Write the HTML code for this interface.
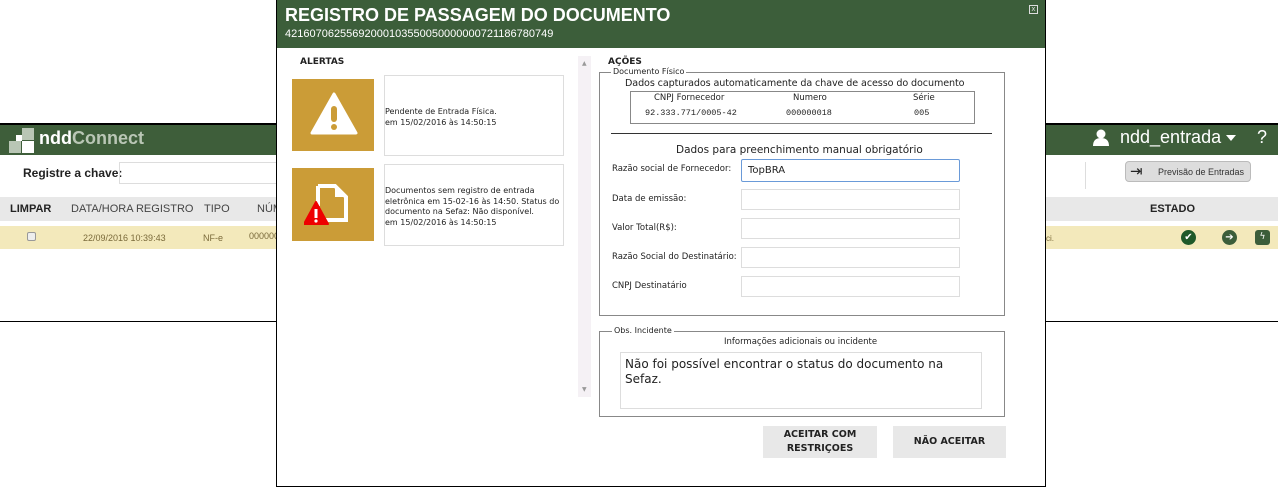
<!DOCTYPE html><html><head><meta charset="utf-8"><style>
*{box-sizing:border-box;margin:0;padding:0}
body{width:1278px;height:490px;background:#fff;position:relative;overflow:hidden;font-family:"DejaVu Sans","Liberation Sans",sans-serif;color:#222}
.a{position:absolute}
.f{font-family:"Liberation Sans",sans-serif}
</style></head><body>
<div class="a" style="left:0;top:123px;width:1278px;height:199px;border-top:2px solid #000;border-bottom:1px solid #000"></div>
<div class="a" style="left:0;top:125px;width:1278px;height:30px;background:#3e5e3a"></div>
<div class="a" style="left:9px;top:128px;width:26px;height:26px">
<div class="a" style="left:13px;top:0;width:12px;height:12px;background:#b9c6b5"></div>
<div class="a" style="left:0;top:13px;width:12px;height:12px;background:#b9c6b5"></div>
<div class="a" style="left:13px;top:13px;width:12px;height:12px;background:#fff"></div>
<div class="a" style="left:7px;top:7px;width:6px;height:6px;background:#fff"></div></div>
<div class="a f" style="left:39px;top:128px;font-size:18px;font-weight:bold;color:#fff">ndd<span style="color:#b9c6b5">Connect</span></div>
<div class="a f" style="left:23px;top:166px;font-size:12px;font-weight:bold">Registre a chave:</div>
<div class="a" style="left:119px;top:162px;width:160px;height:22px;border:1px solid #ddd"></div>
<div class="a" style="left:0;top:197px;width:1278px;height:24px;background:#e8e8e8"></div>
<div class="a f" style="left:10px;top:203px;font-size:11px;font-weight:bold">LIMPAR</div>
<div class="a f" style="left:71px;top:203px;font-size:11px;color:#444">DATA/HORA REGISTRO</div>
<div class="a f" style="left:204px;top:203px;font-size:11px;color:#444">TIPO</div>
<div class="a f" style="left:257px;top:203px;font-size:11px;color:#444">NÚM</div>
<div class="a f" style="left:1150px;top:203px;font-size:11px;font-weight:bold">ESTADO</div>
<div class="a" style="left:0;top:226px;width:1278px;height:23px;background:#f3e9bb"></div>
<div class="a" style="left:27px;top:232px;width:9px;height:9px;border:1px solid #999;border-radius:2px;background:#eee"></div>
<div class="a f" style="left:83px;top:233px;font-size:9px;color:#7a6a3a">22/09/2016 10:39:43</div>
<div class="a f" style="left:203px;top:233px;font-size:9px;color:#7a6a3a">NF-e</div>
<div class="a f" style="left:249px;top:231px;font-size:9px;color:#7a6a3a">000000</div>
<div class="a f" style="left:1046px;top:234px;font-size:8px;color:#7a6a3a">ci.</div>
<div class="a" style="left:1181px;top:230px;width:15px;height:15px;border-radius:50%;background:#1f5a2a;color:#fff;font-size:10px;text-align:center;line-height:15px">✔</div>
<div class="a" style="left:1222px;top:230px;width:15px;height:15px;border-radius:50%;background:#3c5e3a;color:#fff;font-size:10px;text-align:center;line-height:15px">➔</div>
<div class="a" style="left:1255px;top:230px;width:15px;height:15px;border-radius:3px;background:#3c5e3a;color:#fff;font-size:9px;text-align:center;line-height:15px">ϟ</div>
<svg class="a" style="left:1093px;top:129px" width="16" height="18"><circle cx="8" cy="5" r="4.5" fill="#fff"/><path d="M0 17 Q0 9 8 9 Q16 9 16 17 Z" fill="#fff"/></svg>
<div class="a f" style="left:1120px;top:127px;font-size:18px;color:#fff">ndd_entrada</div>
<div class="a" style="left:1226px;top:135px;width:0;height:0;border-left:5px solid transparent;border-right:5px solid transparent;border-top:6px solid #fff"></div>
<div class="a f" style="left:1257px;top:127px;font-size:18px;color:#fff">?</div>
<div class="a" style="left:1085px;top:162px;width:1px;height:27px;background:#ddd"></div>
<div class="a" style="left:1125px;top:161px;width:126px;height:21px;background:#ddd;border:1px solid #bbb;border-radius:4px"></div>
<div class="a" style="left:1130px;top:162px;font-size:15px">⇥</div>
<div class="a f" style="left:1158px;top:167px;font-size:9px;color:#333">Previsão de Entradas</div>
<!-- modal -->
<div class="a" style="left:276px;top:0;width:770px;height:487px;background:#fff;border:1px solid #000;border-top:none"></div>
<div class="a" style="left:277px;top:0;width:768px;height:48px;background:#3c5e3a"></div>
<div class="a f" style="left:285px;top:5px;font-size:18px;font-weight:bold;color:#fff">REGISTRO DE PASSAGEM DO DOCUMENTO</div>
<div class="a f" style="left:285px;top:28px;font-size:11px;color:#fff">42160706255692000103550050000000721186780749</div>
<div class="a" style="left:1029px;top:5px;width:9px;height:9px;border:1px solid #ddd;color:#ddd;font-size:7px;line-height:7px;text-align:center">x</div>
<div class="a" style="left:300px;top:57px;font-size:9px;font-weight:bold">ALERTAS</div>
<div class="a" style="left:292px;top:79px;width:82px;height:72px;background:#cb9c37"></div>
<svg class="a" style="left:309px;top:91px" width="50" height="45"><path d="M25 3 L47 42 L3 42 Z" fill="#fff" stroke="#fff" stroke-width="3" stroke-linejoin="round"/><rect x="22" y="15" width="6" height="16" rx="3" fill="#cb9c37"/><circle cx="25" cy="36" r="3" fill="#cb9c37"/></svg>
<div class="a" style="left:384px;top:75px;width:180px;height:81px;border:1px solid #ddd"></div>
<div class="a" style="left:385px;top:106px;font-size:8px;line-height:11px">Pendente de Entrada Física.<br>em 15/02/2016 às 14:50:15</div>
<div class="a" style="left:292px;top:168px;width:82px;height:73px;background:#cb9c37"></div>
<svg class="a" style="left:304px;top:180px" width="60" height="50"><path d="M14 6 H31 L42 17 V40 H22" fill="none" stroke="#fff" stroke-width="4"/><path d="M14 6 V26" stroke="#fff" stroke-width="4"/><path d="M31 8 V17 H40" fill="#fff"/><path d="M12 22 L24 44 L0 44 Z" fill="#e00" stroke="#e00" stroke-linejoin="round" stroke-width="2"/><rect x="10.5" y="29" width="3" height="9" fill="#fff"/><circle cx="12" cy="41" r="1.6" fill="#fff"/></svg>
<div class="a" style="left:384px;top:164px;width:180px;height:82px;border:1px solid #ddd"></div>
<div class="a" style="left:385px;top:186px;font-size:8px;line-height:10.7px">Documentos sem registro de entrada<br>eletrônica em 15-02-16 às 14:50. Status do<br>documento na Sefaz: Não disponível.<br>em 15/02/2016 às 14:50:15</div>
<div class="a" style="left:578px;top:56px;width:13px;height:341px;background:#f5f1f5"></div>
<div class="a" style="left:582px;top:60px;font-size:6px;color:#999">▲</div>
<div class="a" style="left:582px;top:386px;font-size:6px;color:#999">▼</div>
<div class="a" style="left:608px;top:57px;font-size:9px;font-weight:bold">AÇÕES</div>
<div class="a" style="left:599px;top:72px;width:406px;height:244px;border:1px solid #888"></div>
<div class="a" style="left:611px;top:67px;font-size:8px;background:#fff;padding:0 2px">Documento Físico</div>
<div class="a" style="left:625px;top:78px;font-size:9.6px;letter-spacing:-0.1px">Dados capturados automaticamente da chave de acesso do documento</div>
<div class="a" style="left:630px;top:91px;width:345px;height:33px;border:1px solid #888"></div>
<div class="a" style="left:654px;top:93px;font-size:8.5px">CNPJ Fornecedor</div>
<div class="a" style="left:793px;top:93px;font-size:8.5px">Numero</div>
<div class="a" style="left:913px;top:93px;font-size:8.5px">Série</div>
<div class="a" style="left:645px;top:108px;font-size:8.5px;font-family:'Liberation Mono',monospace">92.333.771/0005-42</div>
<div class="a" style="left:786px;top:108px;font-size:8.5px;font-family:'Liberation Mono',monospace">000000018</div>
<div class="a" style="left:914px;top:108px;font-size:8.5px;font-family:'Liberation Mono',monospace">005</div>
<div class="a" style="left:611px;top:133px;width:381px;height:1px;background:#333"></div>
<div class="a" style="left:676px;top:144px;font-size:10.5px">Dados para preenchimento manual obrigatório</div>
<div class="a" style="left:612px;top:164px;font-size:8.5px">Razão social de Fornecedor:</div>
<div class="a" style="left:741px;top:159px;width:219px;height:23px;border:1px solid #6a9ad8;border-radius:2px;font-size:10px;padding:5px 6px">TopBRA</div>
<div class="a" style="left:612px;top:194px;font-size:8.5px">Data de emissão:</div>
<div class="a" style="left:741px;top:189px;width:219px;height:21px;border:1px solid #ddd"></div>
<div class="a" style="left:612px;top:223px;font-size:8.5px">Valor Total(R$):</div>
<div class="a" style="left:741px;top:218px;width:219px;height:21px;border:1px solid #ddd"></div>
<div class="a" style="left:612px;top:252px;font-size:8.5px">Razão Social do Destinatário:</div>
<div class="a" style="left:741px;top:247px;width:219px;height:21px;border:1px solid #ddd"></div>
<div class="a" style="left:612px;top:281px;font-size:8.5px">CNPJ Destinatário</div>
<div class="a" style="left:741px;top:276px;width:219px;height:21px;border:1px solid #ddd"></div>
<div class="a" style="left:599px;top:331px;width:406px;height:86px;border:1px solid #888"></div>
<div class="a" style="left:612px;top:326px;font-size:8px;background:#fff;padding:0 2px">Obs. Incidente</div>
<div class="a" style="left:724px;top:337px;font-size:8.5px">Informações adicionais ou incidente</div>
<div class="a" style="left:620px;top:352px;width:362px;height:57px;border:1px solid #ddd;font-size:12px;padding:4px 4px;line-height:15px">Não foi possível encontrar o status do documento na Sefaz.</div>
<div class="a" style="left:763px;top:426px;width:114px;height:32px;background:#e8e8e8;font-size:9.5px;font-weight:bold;text-align:center;line-height:14px;padding-top:2px">ACEITAR COM<br>RESTRIÇOES</div>
<div class="a" style="left:893px;top:426px;width:113px;height:32px;background:#e8e8e8;font-size:9.5px;font-weight:bold;text-align:center;line-height:32px">NÃO ACEITAR</div>
</body></html>
